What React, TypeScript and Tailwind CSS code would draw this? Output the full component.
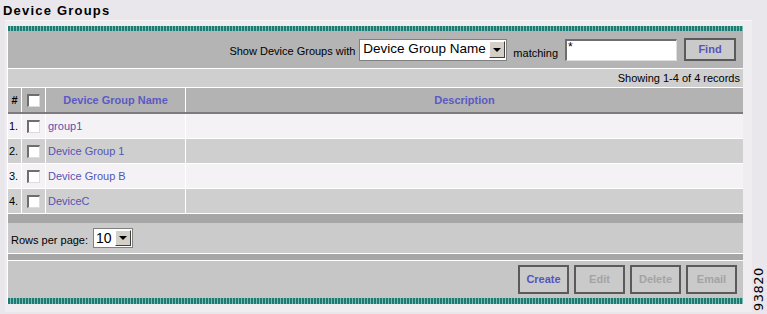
const Check = () => (
  <div className="w-[13px] h-[13px] bg-white border-t-2 border-l-2 border-[#6e6e6e] border-r border-b border-r-[#dcdcdc] border-b-[#dcdcdc]"></div>
)

const Arrow = ({ size }: { size: string }) => (
  <div className={`${size} bg-[#d4d0c8] border border-t-white border-l-white border-r-[#404040] border-b-[#404040] flex items-center justify-center`}>
    <div className="w-0 h-0 border-l-[4px] border-r-[4px] border-t-[4px] border-l-transparent border-r-transparent border-t-black"></div>
  </div>
)

const rows = [
  { n: '1.', name: 'group1' },
  { n: '2.', name: 'Device Group 1' },
  { n: '3.', name: 'Device Group B' },
  { n: '4.', name: 'DeviceC' },
]

const Stripe = ({ h }: { h: string }) => (
  <div className={`${h} bg-[repeating-linear-gradient(90deg,#1e7b73_0_2px,#76bdb4_2px_3px)]`}></div>
)

const Btn = ({ label, on }: { label: string; on?: boolean }) => (
  <button className={`w-[51px] h-[29px] bg-[#cacaca] border-2 border-[#5a5a5a] text-[11px] font-bold ${on ? 'text-[#5555bb]' : 'text-[#a3a3a3]'}`}>
    {label}
  </button>
)

export default function App() {
  return (
    <div className="w-[767px] h-[314px] bg-[#e9e7eb] relative font-['Liberation_Sans',Arial,sans-serif] text-[11px] text-black overflow-hidden">
      <div className="pl-[3px] pt-[3px] h-[20px] text-[13px] font-bold tracking-[1.2px] leading-[15px]">Device Groups</div>
      <div className="ml-[5px] w-[747px] border-t border-[#f6f5f7] bg-[#efedf0] pt-[5px] pl-[2px] pb-[8px]">
        <div className="w-[736px] border-l border-white">
          <Stripe h="h-[5px]" />
          {/* filter bar */}
          <div className="h-[38px] bg-[#b4b4b4] flex items-center justify-end pr-[7px] border-b border-white">
            <span className="mr-[4px] mt-[3px]">Show Device Groups with</span>
            <div className="w-[148px] h-[22px] bg-white border border-[#808080] flex items-center justify-between pl-[3px] pr-[1px]">
              <span className="text-[13.5px]">Device Group Name</span>
              <Arrow size="w-[16px] h-[17px]" />
            </div>
            <span className="ml-[6px] mr-[7px] mt-[7px]">matching</span>
            <div className="w-[112px] h-[22px] bg-white border-t-2 border-l-2 border-[#6e6e6e] border-b border-r border-b-[#dedede] border-r-[#dedede] text-[12px] leading-[12px] pl-[1px]">*</div>
            <button className="ml-[7px] w-[52px] h-[23px] bg-[#cacaca] border-2 border-[#5a5a5a] text-[11px] font-bold text-[#5555bb]">Find</button>
          </div>
          <div className="h-[19px] bg-[#cfcfcf] flex items-center justify-end pr-[3px] border-b border-white">Showing 1-4 of 4 records</div>
          {/* table */}
          <div className="flex h-[26px] bg-[#b3b3b3] border-b-2 border-[#7e7b7e] text-[#5a5ac4] font-bold">
            <div className="w-[14px] flex items-center justify-center text-black border-r border-white">#</div>
            <div className="w-[24px] flex items-center justify-center border-r border-white"><Check /></div>
            <div className="w-[140px] flex items-center justify-center border-r border-white">Device Group Name</div>
            <div className="flex-1 flex items-center justify-center">Description</div>
          </div>
          {rows.map((r, i) => (
            <div key={r.n} className={`flex h-[25px] border-b border-white ${i % 2 === 0 ? 'bg-[#f5f2f5]' : 'bg-[#cfcfcf]'}`}>
              <div className="w-[14px] flex items-center pl-[1px] border-r border-white">{r.n}</div>
              <div className="w-[24px] flex items-center justify-center border-r border-white"><Check /></div>
              <div className="w-[140px] flex items-center pl-[2px] text-[#5454b4] border-r border-white">{r.name}</div>
              <div className="flex-1"></div>
            </div>
          ))}
          <div className="h-[9px] bg-[#a6a6a6]"></div>
          <div className="h-[31px] bg-[#cbcbcb] flex items-center pl-[3px] border-b border-white">
            <span className="mt-[5px] mr-[5px]">Rows per page:</span>
            <div className="w-[40px] h-[20px] bg-white border border-[#808080] flex items-center justify-between pl-[2px] pr-[1px]">
              <span className="text-[14px]">10</span>
              <Arrow size="w-[16px] h-[16px]" />
            </div>
          </div>
          <div className="h-[7px] bg-[#a6a6a6] border-b border-white"></div>
          <div className="h-[37px] bg-[#c6c6c6] flex items-center justify-end gap-[5px] pr-[6px]">
            <Btn label="Create" on />
            <Btn label="Edit" />
            <Btn label="Delete" />
            <Btn label="Email" />
          </div>
          <Stripe h="h-[6px]" />
        </div>
      </div>
      <div className="absolute left-[752px] top-[311px] origin-top-left -rotate-90 text-[13px] leading-[14px] font-['DejaVu_Sans',sans-serif] tracking-[0.5px]">93820</div>
    </div>
  )
}
